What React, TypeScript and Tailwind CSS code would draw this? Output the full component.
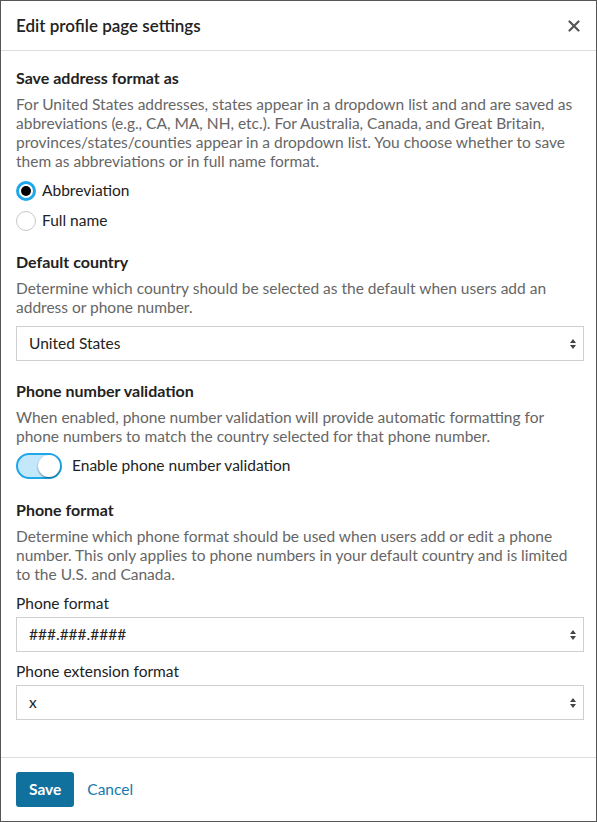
import React, { useState } from 'react';

const SelectArrows: React.FC = () => (
  <svg width="8" height="12" viewBox="0 0 8 12" className="text-[#444]">
    <path d="M4 1 L7 5 H1 Z" fill="currentColor" />
    <path d="M4 11 L7 7 H1 Z" fill="currentColor" />
  </svg>
);

interface SelectBoxProps {
  value: string;
}

const SelectBox: React.FC<SelectBoxProps> = ({ value }) => (
  <div className="flex h-[35px] items-center justify-between border border-[#cfcfcf] bg-white pl-3 pr-[6px] text-[15.5px] text-[#222]">
    <span>{value}</span>
    <SelectArrows />
  </div>
);

const Heading: React.FC<{ children: React.ReactNode }> = ({ children }) => (
  <h3 className="text-[16px] font-bold leading-[22px] text-[#222]">{children}</h3>
);

const Help: React.FC<{ children: React.ReactNode }> = ({ children }) => (
  <p className="mt-[6px] text-[15.5px] leading-[19px] text-[#666]">{children}</p>
);

export default function App() {
  const [format, setFormat] = useState('abbr');
  const [validate, setValidate] = useState(true);

  return (
    <div
      className="flex h-[822px] w-[597px] flex-col border border-[#555] bg-white"
      style={{ fontFamily: 'Lato, "Open Sans", sans-serif' }}
    >
      <div className="flex h-[50px] shrink-0 items-center justify-between border-b border-[#ddd] pl-[15px] pr-[16px]">
        <h2 className="text-[17px] font-semibold text-[#222]">Edit profile page settings</h2>
        <svg width="12" height="12" viewBox="0 0 12 12" className="text-[#555]">
          <path d="M1.5 1.5 L10.5 10.5 M10.5 1.5 L1.5 10.5" stroke="currentColor" strokeWidth="2.2" strokeLinecap="round" />
        </svg>
      </div>

      <div className="flex-1 pl-[15px] pr-[12px] pt-[16px]">
        <section>
          <Heading>Save address format as</Heading>
          <Help>
            For United States addresses, states appear in a dropdown list and and are saved as abbreviations
            (e.g., CA, MA, NH, etc.). For Australia, Canada, and Great Britain, provinces/states/counties appear
            in a dropdown list. You choose whether to save them as abbreviations or in full name format.
          </Help>
          <div className="mt-[10px] flex flex-col gap-[10px]">
            {[
              { id: 'abbr', label: 'Abbreviation' },
              { id: 'full', label: 'Full name' },
            ].map((opt) => {
              const checked = format === opt.id;
              return (
                <label key={opt.id} className="flex h-[20px] cursor-pointer items-center gap-[6px] text-[15.5px] text-[#222]">
                  <span
                    onClick={() => setFormat(opt.id)}
                    className={
                      checked
                        ? 'flex h-[20px] w-[20px] items-center justify-center rounded-full border-[3px] border-[#1ea7e9] bg-white'
                        : 'flex h-[20px] w-[20px] items-center justify-center rounded-full border border-[#c8c8c8] bg-white'
                    }
                  >
                    {checked && <span className="h-[10px] w-[10px] rounded-full bg-black" />}
                  </span>
                  {opt.label}
                </label>
              );
            })}
          </div>
        </section>

        <section className="mt-[20px]">
          <Heading>Default country</Heading>
          <Help>
            Determine which country should be selected as the default when users add an address or phone number.
          </Help>
          <div className="mt-[9px]">
            <SelectBox value="United States" />
          </div>
        </section>

        <section className="mt-[19px]">
          <Heading>Phone number validation</Heading>
          <Help>
            When enabled, phone number validation will provide automatic formatting for phone numbers to match the
            country selected for that phone number.
          </Help>
          <div className="mt-[7px] flex items-center gap-[10px]">
            <button
              onClick={() => setValidate(!validate)}
              className="relative h-[26px] w-[46px] rounded-full border-2 border-[#1ea7e9] bg-[#c3e7fb]"
            >
              <span
                className={
                  validate
                    ? 'absolute right-0 top-0 h-[22px] w-[22px] rounded-full bg-white shadow-[0_1px_2px_rgba(0,0,0,0.45)]'
                    : 'absolute left-0 top-0 h-[22px] w-[22px] rounded-full bg-white shadow-[0_1px_2px_rgba(0,0,0,0.45)]'
                }
              />
            </button>
            <span className="text-[15.5px] text-[#222]">Enable phone number validation</span>
          </div>
        </section>

        <section className="mt-[20px]">
          <Heading>Phone format</Heading>
          <Help>
            Determine which phone format should be used when users add or edit a phone number. This only applies to
            phone numbers in your default country and is limited to the U.S. and Canada.
          </Help>
          <div className="mt-[9px] text-[15.5px] leading-[20px] text-[#222]">Phone format</div>
          <div className="mt-[4px]">
            <SelectBox value="###.###.####" />
          </div>
          <div className="mt-[9px] text-[15.5px] leading-[20px] text-[#222]">Phone extension format</div>
          <div className="mt-[4px]">
            <SelectBox value="x" />
          </div>
        </section>
      </div>

      <div className="flex h-[64px] shrink-0 items-center gap-[13px] border-t border-[#ddd] px-[15px]">
        <button className="h-[35px] rounded-[3px] bg-[#10709e] px-[13px] text-[15.5px] font-bold text-white">Save</button>
        <button className="text-[15.5px] text-[#1479ad]">Cancel</button>
      </div>
    </div>
  );
}
